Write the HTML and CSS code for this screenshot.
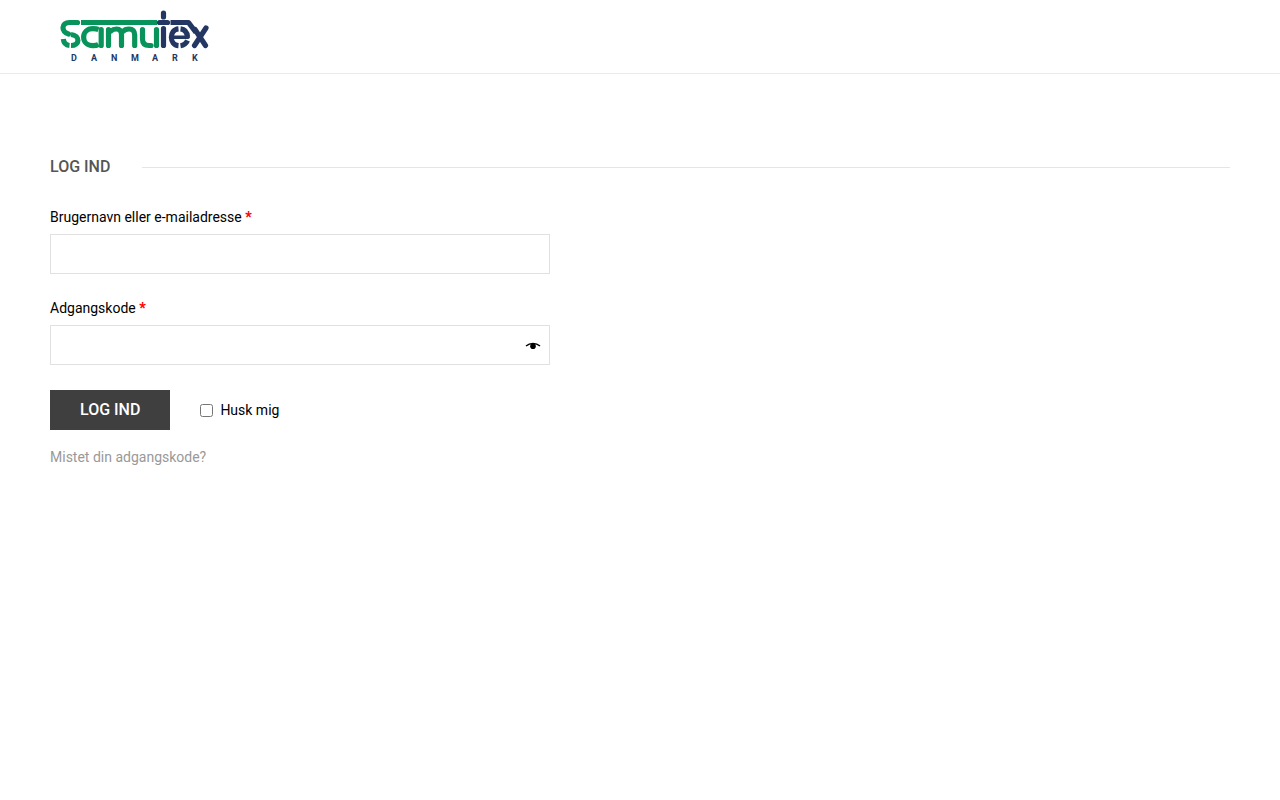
FILE: index.html
```html
<!DOCTYPE html>
<html lang="da">
<head>
<meta charset="utf-8">
<meta name="viewport" content="width=device-width, initial-scale=1">
<title>Log ind – Samutex Danmark</title>
<link rel="stylesheet" href="styles.css">
</head>
<body>
<header class="site-header">
  <a class="logo" href="#" aria-label="Samutex Danmark">
    <svg class="logo-art" viewBox="50 0 168 73" aria-hidden="true">
      <g class="logo-green">
        <path d="M77.500 22.500H69.500C61 22.500 61 32 68.500 34"/>
        <path class="butt" d="M81 22.500H157"/>
        <path class="butt" d="M71 34.500C80.500 35.500 80 45.500 71 45.500"/>
        <path class="butt" d="M69.500 45.500Q64 45 63.300 39"/>
        <path d="M101.200 45.500V29.500"/>
        <path class="butt" d="M98.500 29.500Q96.500 28.700 93 28.700C80.500 28.700 80.500 45.700 93 45.700Q96.500 45.700 98.500 44.500"/>
        <path d="M108.500 45.500V29.500M121.500 45.500V35Q121.500 29 116.500 29Q113 29 111 31M134.700 45.500V35Q134.700 29 129 29Q125 29 123 31.500"/>
        <path d="M142.500 29.500V39Q142.500 45.500 149 45.500H151M156.500 29.500V45.500"/>
      </g>
      <g class="logo-navy">
        <path d="M163.500 13V17M159.500 22.500H167.500M163.500 28.500V45.500"/>
        <path class="butt" d="M170.500 22.500H188.500L196 32.500"/>
        <path class="butt" d="M178.500 45.700C169 45 169 29.500 178.500 28.800M180.500 28.800Q187 29.500 187.500 37M180.500 45.700Q185.500 45 187.500 40.500"/>
        <path class="bar" d="M173 37.300H188"/>
        <path d="M195 29.500L205.500 45.500M206 28L194.500 45.500"/>
      </g>
      <text class="logo-sub" y="61"><tspan x="71">D</tspan><tspan x="91">A</tspan><tspan x="111">N</tspan><tspan x="131">M</tspan><tspan x="152">A</tspan><tspan x="172">R</tspan><tspan x="192">K</tspan></text>
    </svg>
  </a>
</header>
<main class="page">
  <h1 class="title">Log ind</h1>
  <form class="login">
    <div class="field">
      <label for="username">Brugernavn eller e-mailadresse <span class="required">*</span></label>
      <input class="text-input" id="username" type="text" autocomplete="username">
    </div>
    <div class="field">
      <label for="password">Adgangskode <span class="required">*</span></label>
      <div class="password">
        <input class="text-input" id="password" type="password" autocomplete="current-password">
        <button class="reveal" type="button" aria-label="Vis adgangskode">
          <svg class="eye" viewBox="0 0 16 8" aria-hidden="true"><path class="lid" d="M1 4Q4 1.500 8 1.500T15 4"/><circle cx="8" cy="4.200" r="2.800"/></svg>
        </button>
      </div>
    </div>
    <div class="actions">
      <button class="submit" type="submit">Log ind</button>
      <label class="remember"><input class="check" type="checkbox">Husk mig</label>
    </div>
    <a class="lost" href="#">Mistet din adgangskode?</a>
  </form>
</main>
</body>
</html>
```

FILE: styles.css
```css
* { box-sizing: border-box; }
body { margin: 0; background: #fff; color: #000; font: 14px/24px Roboto, "Liberation Sans", sans-serif; }
.site-header { padding: 0 50px; border-bottom: 1px solid #ebebeb; }
.logo { display: inline-block; vertical-align: top; }
.logo-art { display: block; width: 168px; height: 73px; fill: none; stroke-width: 5.2; stroke-linecap: round; stroke-linejoin: round; }
.logo-green { stroke: #07935a; }
.logo-navy { stroke: #243763; }
.logo-art .butt { stroke-linecap: butt; }
.logo-art .bar { stroke-width: 3.6; }
.logo-sub { fill: #243763; font: 700 9px Roboto, sans-serif; }
.page { padding: 80px 50px; }
.title { display: flex; align-items: center; gap: 32px; margin: 0 0 25px; color: #555; font-size: 16px; font-weight: 500; line-height: 26px; text-transform: uppercase; }
.title::after { content: ""; flex: 1; height: 1px; background: #e5e5e5; }
.login { max-width: 500px; }
.field { margin-bottom: 22px; }
.field label { display: block; margin-bottom: 5px; }
.required { color: #f00; font-weight: 900; }
.text-input { display: block; width: 100%; height: 40px; padding: 0 15px; border: 1px solid #e1e1e1; background: #fff; font: inherit; }
.password { position: relative; }
.password .text-input { padding-right: 40px; }
.reveal { position: absolute; top: 0; right: 0; display: flex; align-items: center; justify-content: center; width: 34px; height: 42px; padding: 0; border: 0; background: none; color: #000; }
.eye { width: 16px; height: 8px; fill: currentColor; }
.lid { fill: none; stroke: currentColor; stroke-width: 1.5; }
.actions { display: flex; align-items: center; gap: 30px; margin: 25px 0 15px; }
.submit { height: 40px; padding: 0 30px; border: 0; background: #3f3f3f; color: #fff; font: 500 16px/24px Roboto, sans-serif; text-transform: uppercase; }
.remember { display: flex; align-items: center; gap: 7px; }
.check { width: 13px; height: 13px; margin: 0; }
.lost { color: #999; text-decoration: none; }
```
